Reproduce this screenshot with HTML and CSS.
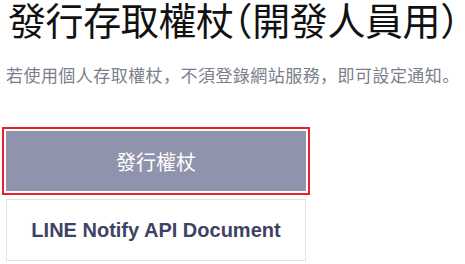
FILE: index.html
```html
<!DOCTYPE html>
<html>

<head>
    <meta charset="utf-8">
    <link rel="stylesheet" href="styles.css">
</head>

<body>

    <div class="page">
        <h1 class="title">發行存取權杖（開發人員用）</h1>
        <p class="desc">若使用個人存取權杖，不須登錄網站服務，即可設定通知。</p>

        <div class="actions">
            <a href="#" class="btn btn-primary">發行權杖</a>
            <a href="#" class="btn btn-doc">LINE Notify API Document</a>
        </div>
    </div>

</body>

</html>
```

FILE: styles.css
```css
body {
    font-family: "Liberation Sans", "Noto Sans CJK TC", sans-serif;
    margin: 0;
    background-color: #fff;
}

.page {
    padding: 0 0 0 6px;
}

.title {
    font-family: "Liberation Sans", "Noto Sans CJK TC", sans-serif;
    font-feature-settings: "halt";
    font-size: 38px;
    font-weight: 400;
    letter-spacing: -0.4px;
    color: #111;
    margin: 0;
    line-height: 45px;
    padding-left: 2px;
    white-space: nowrap;
}

.desc {
    font-family: "Noto Sans CJK SC", sans-serif;
    font-size: 17px;
    letter-spacing: 0.45px;
    color: #7b7e8c;
    margin: 18px 0 0 0;
    line-height: 24px;
    white-space: nowrap;
}

.actions {
    display: flex;
    flex-direction: column;
    gap: 8px;
    width: 300px;
    margin-top: 44px;
}

.btn {
    display: flex;
    align-items: center;
    justify-content: center;
    text-decoration: none;
    box-sizing: border-box;
}

.btn-primary {
    height: 60px;
    background-color: #8f93ab;
    color: #fff;
    font-family: "Noto Sans CJK TC", sans-serif;
    font-size: 20px;
    outline: 2px solid #e8202a;
    outline-offset: 2px;
}

.btn-doc {
    height: 62px;
    border: 1px solid #e3e3e3;
    color: #3d4266;
    font-size: 20px;
    font-weight: bold;
}
```
